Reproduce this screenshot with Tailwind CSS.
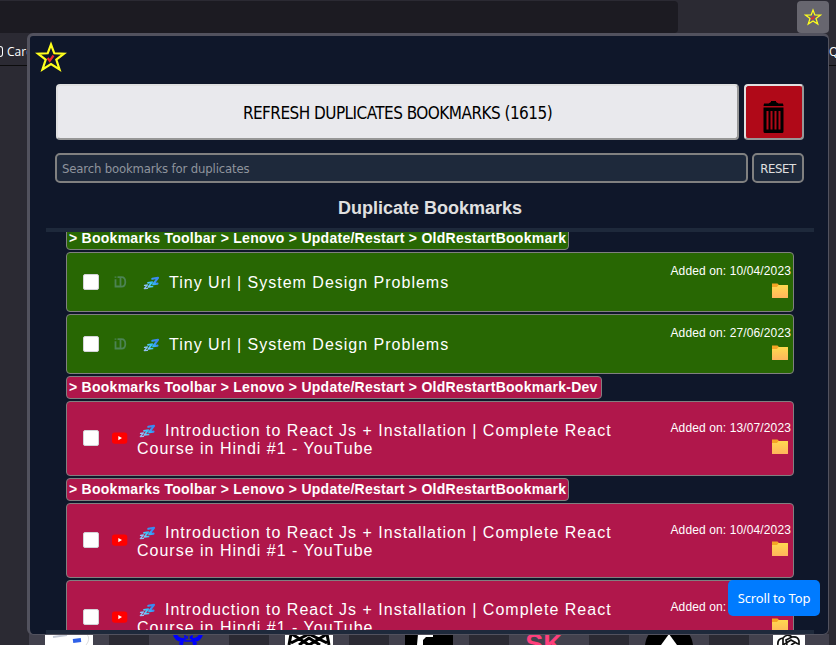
<!DOCTYPE html>
<html lang="en">
<head>
<meta charset="utf-8">
<title>Duplicate Bookmarks</title>
<script src="https://cdn.jsdelivr.net/npm/@tailwindcss/browser@4"></script>
</head>
<body class="w-[836px] h-[645px] overflow-hidden bg-[#2b2a33] font-['Liberation_Sans',Arial,sans-serif]">
<svg class="absolute w-0 h-0">
  <defs>
    <linearGradient id="fg" x1="0" y1="0" x2="0" y2="1"><stop offset="0" stop-color="#ffd94f"/><stop offset="1" stop-color="#ffb55c"/></linearGradient>
    <linearGradient id="zg" gradientUnits="userSpaceOnUse" x1="0" y1="14" x2="16" y2="1"><stop offset="0" stop-color="#9db4e8"/><stop offset=".25" stop-color="#8fc4ff"/><stop offset=".5" stop-color="#35c8f8"/><stop offset=".75" stop-color="#3a8cf4"/><stop offset="1" stop-color="#3a86f0"/></linearGradient>
    <symbol id="folder" viewBox="0 0 16 15"><path d="M0 .5h5.500l1.500 1.500h9V5H0z" fill="#f5a524"/><path d="M0 4h5l1.500-2H15.500q.5 0 .5.500V14.500q0 .5-.5.5H.5q-.5 0-.5-.5z" fill="url(#fg)"/></symbol>
    <symbol id="zzz" viewBox="0 0 17 15"><g fill="none" stroke="url(#zg)" stroke-linejoin="round" stroke-linecap="round"><path stroke-width="2.100" d="M9.300 2.800L15 1.800L10.200 8.200L14.500 7.600"/><path stroke-width="1.700" d="M5 6.800L9.300 6L5.300 11L9.500 10.500"/><path stroke-width="1.300" d="M1.500 9.300L4.500 8.900L1.300 12.600L4.500 12.300"/></g></symbol>
    <symbol id="yt" viewBox="0 0 16 16"><rect x="0" y="2.500" width="15.300" height="11.300" rx="2.800" fill="#f00"/><path d="M6.300 6v4.200L10 8.100z" fill="#fff"/></symbol>
    <symbol id="id" viewBox="0 0 16 16"><g fill="none" stroke="#4c8354" stroke-width="1.800"><path d="M3.500 2.500v1.300M3.500 5.200v7.300h4M5.500 3.200h4q3.800 0 3.800 4.700t-3.800 4.700h-3M8.500 4v8"/></g></symbol>
    <symbol id="star" viewBox="0 0 32 32"><path d="M16 3.500L19.300 12.300L29 12.700L21.300 18.600L24.500 28.500L16 23L7.500 28.500L10.700 18.600L3 12.700L12.700 12.300z" fill="none" stroke="#ffff1c" stroke-width="2.200"/><path d="M12.700 17l2 2.800 3.800-5.300" fill="none" stroke="#f0252d" stroke-width="2.200"/></symbol>
  </defs>
</svg>

<div class="flex flex-col h-full">
  <!-- browser toolbar -->
  <div class="h-[33px] flex justify-between">
    <div class="w-[678px] h-8 mt-px rounded-r bg-[#1c1b22]"></div>
    <div class="w-8 h-8 mr-[7px] mt-px rounded bg-[#67666f] flex items-center justify-center"><svg class="size-[18px]"><use href="#star"/></svg></div>
  </div>
  <div class="h-[33px] border-b border-[#0c0c0d] flex justify-between items-center text-white text-[12px] leading-4 font-['Open_Sans',sans-serif]">
    <div class="flex items-center gap-1 pt-[5px]"><span class="w-[3px] h-[11px] border border-l-0 rounded-r-sm border-white"></span><span>Cards</span></div>
    <span class="w-[7px] pt-[5px] overflow-hidden">Q</span>
  </div>
  <div class="grow"></div>
  <!-- page tiles visible under the popup -->
  <div class="h-[11px] pl-[29px] flex gap-10 overflow-hidden">
    <div class="w-20 shrink-0 bg-[#42414d] flex justify-center"><svg class="w-12 h-[11px] bg-white"><path d="M8 3l14-2" stroke="#c3c9d5" stroke-width="2"/><path d="M28 7l8-1" stroke="#2f61e8" stroke-width="4"/><path d="M41 0q4 2 2 8l-2 3" stroke="#ddd" fill="none"/></svg></div>
    <div class="w-20 shrink-0 bg-[#42414d] flex justify-center"><svg class="w-12 h-[11px]"><path d="M10 0q1 5 7 6l-1 5M36 0q-1 5-7 6l1 5" stroke="#00f" stroke-width="4" fill="none"/><path d="M20 1v6h7V1M22 2v3M25.500 2v3" stroke="#00f" stroke-width="1.500" fill="none"/></svg></div>
    <div class="w-20 shrink-0 bg-[#42414d] flex justify-center"><svg class="w-12 h-[11px] bg-white"><path d="M6 0L4 11M7 0l17 11L42 0M14 11L24 4l11 7M42 0l2 11M6 9L24 0l18 9" stroke="#000" stroke-width="3" fill="none"/></svg></div>
    <div class="w-20 shrink-0 bg-[#42414d] flex justify-center"><svg class="w-12 h-[11px] bg-black"><path d="M13 0h15v3h-7l-3 3v5h-6z" fill="#fff"/></svg></div>
    <div class="w-20 shrink-0 bg-[#42414d] flex justify-center"><div class="w-12 h-[11px] mr-[10px] overflow-hidden text-[#ff3f7c] text-[27px] leading-[20px] font-bold text-center">SK</div></div>
    <div class="w-20 shrink-0 bg-[#42414d] flex justify-center"><svg class="w-12 h-[11px]"><path d="M0 11Q1 4 4 0h40q3 4 4 11z"/><path d="M16 11L24 0l8 11z" fill="#fff"/></svg></div>
    <div class="w-20 shrink-0 bg-[#42414d] flex justify-center"><svg class="w-8 h-[11px] bg-white"><path d="M5 11Q4 5 10 4q4-5 9-1 6-1 7 4l0 4M10 4v7l8-5 7 4M14 11l-1-5 6-3M18 11l5-3" stroke="#111" stroke-width="1.700" fill="none"/></svg></div>
  </div>
</div>

<!-- extension popup -->
<main class="absolute left-[27px] top-[33px] w-[802px] h-[602px] rounded-[6px] border-t-[3px] border-l-[3px] border-r border-b border-[#52525e] bg-[#0f172a] overflow-hidden flex flex-col px-4">
  <header class="h-12 pt-[5px] -ml-[11px]"><svg class="size-8"><use href="#star"/></svg></header>
  <div class="flex gap-[5px] h-14 pl-[10px]">
    <button class="w-[683px] shrink-0 rounded-[4px] border-2 border-t-[#e0e0e0] border-l-[#e0e0e0] border-r-[#979797] border-b-[#979797] bg-[#e9e9ed] pt-[3px] text-black text-[17px] tracking-[-0.54px] font-['DejaVu_Sans_Condensed','Noto_Sans',sans-serif]">REFRESH DUPLICATES BOOKMARKS (1615)</button>
    <button class="w-[60px] shrink-0 rounded-[4px] border-2 border-t-[#e0e0e0] border-l-[#e0e0e0] border-r-[#979797] border-b-[#979797] bg-[#b00918] flex justify-center pt-[15px] pr-[1px]"><svg class="w-[21px] h-8" viewBox="0 0 21 32"><path d="M1 2.500h4.500L8 1V0h5v1l2.500 1.500H20l.5 2.500H.5zM.5 6.500h20v24q0 1.500-1.500 1.500H2q-1.500 0-1.500-1.500zM3.500 10v18.500h2V10zm4 0v18.500h2V10zm4 0v18.500h2V10zm4 0v18.500h2V10z" fill="#000" fill-rule="evenodd"/></svg></button>
  </div>
  <div class="flex gap-1 h-[30px] mt-[13px] pl-[9px] font-['DejaVu_Sans_Condensed','Noto_Sans',sans-serif]">
    <div class="w-[693px] shrink-0 rounded-[5px] border-2 border-[#808080] bg-[#1e293b] text-[#8f949d] text-[13px] tracking-[-0.16px] flex items-center px-[5px] pt-px">Search bookmarks for duplicates</div>
    <button class="w-[52px] shrink-0 rounded-[5px] border-2 border-[#808080] bg-[#1e293b] text-[#e0e0e0] text-[13px] tracking-[-0.4px] pt-px">RESET</button>
  </div>
  <h1 class="h-[45px] pt-[14px] pl-[2px] text-center text-[18px] leading-[22px] font-bold text-[#e0e0e0]">Duplicate Bookmarks</h1>
  <section class="w-[768px] h-[406px] border-y-4 border-[#1e293b] px-5 overflow-hidden">
    <div id="list" class="flex flex-col gap-[2px] items-start -mt-[5px]"></div>
  </section>
</main>
<button class="absolute left-[728px] top-[580px] w-[92px] h-9 rounded-[5px] bg-[#007bff] text-white text-[13px] tracking-[-0.15px] pt-px font-['Noto_Sans',sans-serif]">Scroll to Top</button>

<template id="label"><div class="h-[23px] shrink-0 rounded-[4px] border border-[#808080] px-[2px] text-white text-[14px] leading-[21px] tracking-[0.265px] font-bold whitespace-nowrap"></div></template>
<template id="card"><article class="shrink-0 w-[728px] rounded-[4px] border border-[#808080] flex items-center pl-4 pr-[2px] text-white">
  <span class="size-4 rounded-[2px] bg-white border border-[#d4d4d8] shrink-0"></span>
  <svg class="size-4 ml-[13px] shrink-0"><use/></svg>
  <h2 class="w-[500px] ml-[9px] text-[16px] leading-[18px] tracking-[1px]"><svg class="inline-block w-[17px] h-[15px] ml-[2px] mr-[9px] -my-1 align-[1px]"><use href="#zzz"/></svg><span></span></h2>
  <div class="ml-auto flex flex-col items-end text-[12px] leading-[14px] tracking-[0.12px] whitespace-nowrap"><time></time><svg class="w-4 h-[15px] mr-[3px]"><use href="#folder"/></svg></div>
</article></template>
<script>
  const P = '> Bookmarks Toolbar > Lenovo > Update/Restart > OldRestartBookmark';
  const T = 'Tiny Url | System Design Problems';
  const Y = 'Introduction to React Js + Installation | Complete React Course in Hindi #1 - YouTube';
  const green = 'bg-[#286703]', pink = 'bg-[#b0174b]';
  const rows = [
    [P, green, 503], [T, green, '10/04/2023'], [T, green, '27/06/2023'],
    [P + '-Dev', pink, 536], [Y, pink, '13/07/2023'],
    [P, pink, 503], [Y, pink, '10/04/2023'], [Y, pink, '10/04/2023']
  ];
  for (const [text, color, info] of rows) {
    const isLabel = typeof info === 'number';
    const el = document.getElementById(isLabel ? 'label' : 'card').content.firstElementChild.cloneNode(true);
    el.classList.add(color);
    if (isLabel) { el.textContent = text; el.style.width = info + 'px'; }
    else {
      const tiny = text === T;
      el.classList.add(tiny ? 'h-[60px]' : 'h-[75px]');
      const meta = el.lastElementChild;
      if (tiny) meta.classList.add('pb-[3px]', 'gap-[5px]');
      else {
        meta.classList.add('pb-[2px]', 'gap-[4px]');
        el.children[0].classList.add('-mt-px');
        el.children[1].classList.add('-mt-px');
      }
      el.querySelector('use').setAttribute('href', tiny ? '#id' : '#yt');
      el.querySelector('h2').classList.add(...(tiny ? ['pl-[4px]', 'pt-px'] : ['pt-[3px]']));
      el.querySelector('h2 span').textContent = text;
      el.querySelector('time').textContent = 'Added on: ' + info;
    }
    document.getElementById('list').append(el);
  }
</script>
</body>
</html>
